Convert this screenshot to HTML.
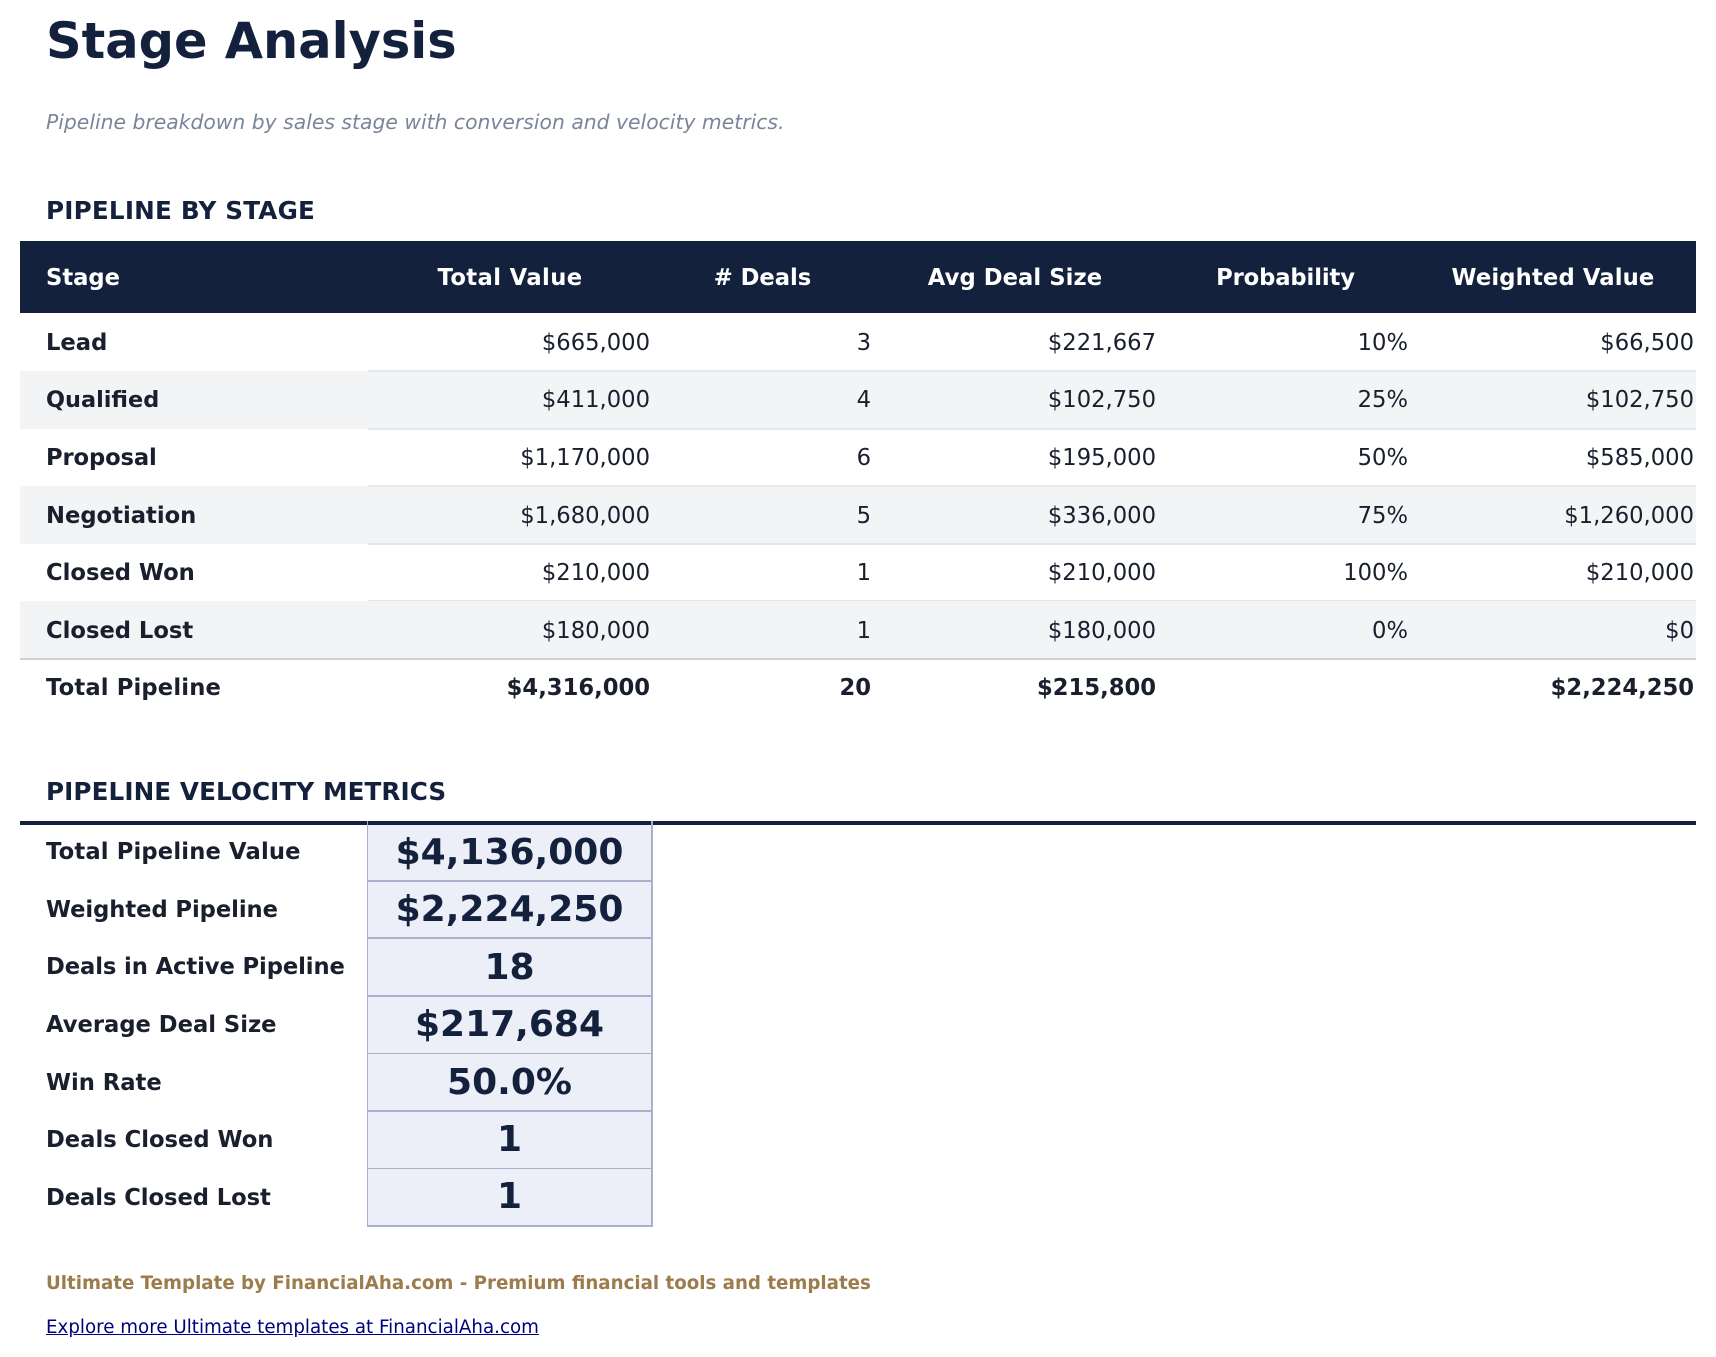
<!DOCTYPE html>
<html lang="en">
<head>
<meta charset="utf-8">
<title>Stage Analysis</title>
<style>
html,body{margin:0;padding:0;background:#fff;}
body{width:1716px;height:1357px;position:relative;overflow:hidden;font-family:"DejaVu Sans",sans-serif;color:#1a1f2e;}
.a{position:absolute;white-space:nowrap;}
.r{position:absolute;left:20px;width:1676px;}
.c{position:absolute;top:0;height:100%;white-space:nowrap;font-size:22.67px;display:flex;align-items:center;}
.c1{left:26px;font-weight:bold;}
.c2{right:1046px;}.c3{right:825px;}.c4{right:540px;}.c5{right:288px;}.c6{right:2px;}
.h .c{color:#fff;font-weight:bold;top:1px;}
.h .c2,.h .c3,.h .c4,.h .c5,.h .c6{right:auto;justify-content:center;}
.b .c{font-weight:bold;}
.line{position:absolute;height:2px;left:348px;right:0;background:#e5e7eb;bottom:-1px;z-index:2;}
.sec{left:46px;font-size:24.67px;font-weight:bold;color:#14213d;line-height:30px;}
.lab{position:absolute;left:46px;font-size:22.67px;font-weight:bold;display:flex;align-items:center;white-space:nowrap;}
.val{position:absolute;left:367px;width:283px;background:#eceff7;border-left:1px solid #a8b0cc;border-right:2px solid #a8b0cc;font-size:36px;font-weight:bold;color:#14213d;display:flex;align-items:center;justify-content:center;box-sizing:content-box;}
.hl{position:absolute;left:367px;width:286px;background:#a8b0cc;}
</style>
</head>
<body>
<div class="a" style="left:46px;top:9px;font-size:49.46px;font-weight:bold;color:#14213d;line-height:64px;">Stage Analysis</div>
<div class="a" style="left:46px;top:107px;font-size:20.33px;font-style:italic;color:#7a8599;line-height:30px;">Pipeline breakdown by sales stage with conversion and velocity metrics.</div>
<div class="a sec" style="top:196px;letter-spacing:.19px;">PIPELINE BY STAGE</div>

<div class="r h" style="top:241px;height:72px;background:#14213d;">
<div class="c c1">Stage</div>
<div class="c c2" style="left:348px;width:284px;letter-spacing:.4px;">Total Value</div>
<div class="c c3" style="left:632px;width:221px;">#&nbsp;Deals</div>
<div class="c c4" style="left:853px;width:284px;letter-spacing:.08px;">Avg Deal Size</div>
<div class="c c5" style="left:1139px;width:253px;letter-spacing:-.1px;">Probability</div>
<div class="c c6" style="left:1390px;width:286px;letter-spacing:.15px;">Weighted Value</div>
</div>

<div class="r" style="top:313px;height:58px;background:#fff;">
<div class="line"></div>
<div class="c c1" style="top:1px;">Lead</div><div class="c c2" style="top:1px;">$665,000</div><div class="c c3" style="top:1px;">3</div><div class="c c4" style="top:1px;">$221,667</div><div class="c c5" style="top:1px;">10%</div><div class="c c6" style="top:1px;">$66,500</div>
</div>
<div class="r" style="top:371px;height:58px;background:#f3f4f6;">
<div class="line"></div>
<div class="c c1" style="font-size:22.4px;">Qualified</div><div class="c c2">$411,000</div><div class="c c3">4</div><div class="c c4">$102,750</div><div class="c c5">25%</div><div class="c c6">$102,750</div>
</div>
<div class="r" style="top:429px;height:57px;background:#fff;">
<div class="line"></div>
<div class="c c1" style="letter-spacing:-.12px;">Proposal</div><div class="c c2">$1,170,000</div><div class="c c3">6</div><div class="c c4">$195,000</div><div class="c c5">50%</div><div class="c c6">$585,000</div>
</div>
<div class="r" style="top:486px;height:58px;background:#f3f4f6;">
<div class="line"></div>
<div class="c c1" style="top:1px;">Negotiation</div><div class="c c2" style="top:1px;">$1,680,000</div><div class="c c3" style="top:1px;">5</div><div class="c c4" style="top:1px;">$336,000</div><div class="c c5" style="top:1px;">75%</div><div class="c c6" style="top:1px;">$1,260,000</div>
</div>
<div class="r" style="top:544px;height:57px;background:#fff;">
<div class="line" style="height:1px;bottom:0;"></div>
<div class="c c1">Closed Won</div><div class="c c2">$210,000</div><div class="c c3">1</div><div class="c c4">$210,000</div><div class="c c5">100%</div><div class="c c6">$210,000</div>
</div>
<div class="r" style="top:601px;height:58px;background:#f3f4f6;">
<div class="c c1" style="top:1px;">Closed Lost</div><div class="c c2" style="top:1px;">$180,000</div><div class="c c3" style="top:1px;">1</div><div class="c c4" style="top:1px;">$180,000</div><div class="c c5" style="top:1px;">0%</div><div class="c c6" style="top:1px;">$0</div>
</div>
<div class="r b" style="top:658px;height:2px;background:#cdd1d9;"></div>
<div class="r b" style="top:660px;height:56px;">
<div class="c c1" style="letter-spacing:.16px;">Total Pipeline</div><div class="c c2">$4,316,000</div><div class="c c3">20</div><div class="c c4">$215,800</div><div class="c c6">$2,224,250</div>
</div>

<div class="a sec" style="top:777px;letter-spacing:.09px;">PIPELINE VELOCITY METRICS</div>

<div class="val" style="top:823px;height:58px;">$4,136,000</div>
<div class="val" style="top:880px;height:58px;">$2,224,250</div>
<div class="val" style="top:938px;height:58px;">18</div>
<div class="val" style="top:996px;height:57px;">$217,684</div>
<div class="val" style="top:1053px;height:58px;">50.0%</div>
<div class="val" style="top:1111px;height:57px;">1</div>
<div class="val" style="top:1168px;height:57px;">1</div>
<div class="hl" style="top:880px;height:2px;"></div>
<div class="hl" style="top:937px;height:2px;"></div>
<div class="hl" style="top:995px;height:2px;"></div>
<div class="hl" style="top:1053px;height:1px;"></div>
<div class="hl" style="top:1110px;height:2px;"></div>
<div class="hl" style="top:1168px;height:1px;"></div>
<div class="hl" style="top:1225px;height:2px;"></div>
<div class="a" style="left:20px;top:821px;width:1676px;height:4px;background:#14213d;"></div>
<div class="a" style="left:367px;top:821px;width:1px;height:4px;background:#a8b0cc;"></div>
<div class="a" style="left:651px;top:821px;width:2px;height:4px;background:#a8b0cc;"></div>

<div class="lab" style="top:823px;height:58px;letter-spacing:.16px;">Total Pipeline Value</div>
<div class="lab" style="top:880px;height:59px;letter-spacing:-.06px;">Weighted Pipeline</div>
<div class="lab" style="top:938px;height:58px;letter-spacing:-.09px;">Deals in Active Pipeline</div>
<div class="lab" style="top:995px;height:59px;">Average Deal Size</div>
<div class="lab" style="top:1053px;height:59px;">Win Rate</div>
<div class="lab" style="top:1110px;height:59px;">Deals Closed Won</div>
<div class="lab" style="top:1168px;height:59px;letter-spacing:-.06px;">Deals Closed Lost</div>

<div class="a" style="left:46px;top:1271px;font-size:18.23px;font-weight:bold;color:#9c7c4c;line-height:26px;">Ultimate Template by FinancialAha.com - Premium financial tools and templates</div>
<a class="a" style="left:46px;top:1315px;font-size:18.25px;color:#000080;line-height:26px;text-decoration:underline;">Explore more Ultimate templates at FinancialAha.com</a>
</body>
</html>
